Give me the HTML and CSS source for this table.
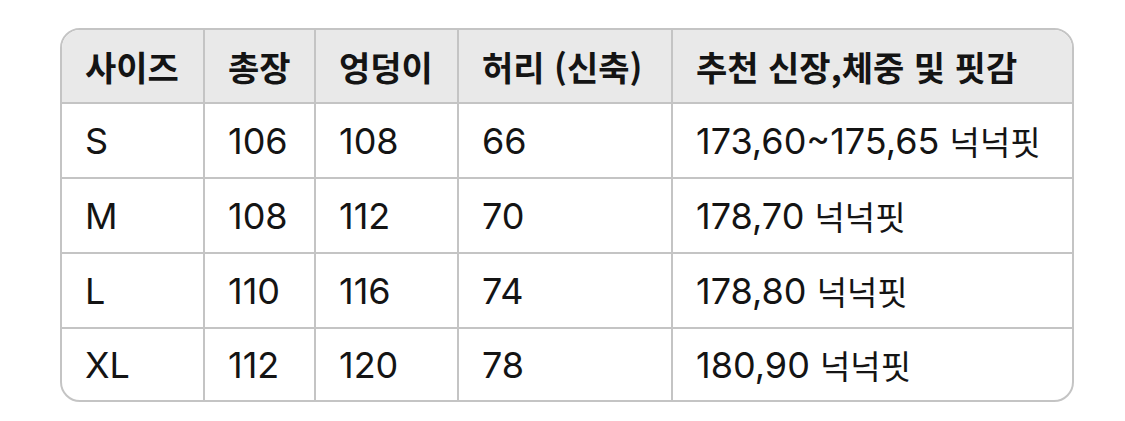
FILE: index.html
```html
<!DOCTYPE html>
<html lang="ko">
<head>
<meta charset="utf-8">
<link rel="stylesheet" href="styles.css">
</head>
<body>
<div class="table">
  <div class="cell head">사이즈</div>
  <div class="cell head">총장</div>
  <div class="cell head">엉덩이</div>
  <div class="cell head">허리 (신축)</div>
  <div class="cell head last-col">추천 신장,체중 및 핏감</div>

  <div class="cell">S</div>
  <div class="cell">106</div>
  <div class="cell">108</div>
  <div class="cell">66</div>
  <div class="cell last-col">173,60~175,65&nbsp;<span class="ko">넉넉핏</span></div>

  <div class="cell">M</div>
  <div class="cell">108</div>
  <div class="cell">112</div>
  <div class="cell">70</div>
  <div class="cell last-col">178,70&nbsp;<span class="ko">넉넉핏</span></div>

  <div class="cell">L</div>
  <div class="cell">110</div>
  <div class="cell">116</div>
  <div class="cell">74</div>
  <div class="cell last-col">178,80&nbsp;<span class="ko">넉넉핏</span></div>

  <div class="cell last-row">XL</div>
  <div class="cell last-row">112</div>
  <div class="cell last-row">120</div>
  <div class="cell last-row">78</div>
  <div class="cell last-row last-col">180,90&nbsp;<span class="ko">넉넉핏</span></div>
</div>
</body>
</html>
```
FILE: styles.css
```css
html, body {
  margin: 0;
  padding: 0;
  background: #ffffff;
}

body {
  padding: 28px 0 0 60px;
  font-family: Inter, "Noto Sans CJK KR", sans-serif;
  color: #141414;
}

.table {
  display: grid;
  grid-template-columns: 143px 111px 143px 214px 399px;
  grid-template-rows: 74px 75px 75px 75px 71px;
  width: 1010px;
  border: 2px solid #c4c4c4;
  border-radius: 20px;
  overflow: hidden;
}

.cell {
  display: flex;
  align-items: center;
  padding-left: 23px;
  font-size: 36px;
  font-weight: 400;
  white-space: nowrap;
  border-right: 2px solid #c4c4c4;
  border-bottom: 2px solid #c4c4c4;
}

.head {
  background: #e9e9e9;
  font-size: 34px;
  font-weight: 600;
  font-family: "Noto Sans CJK KR", Inter, sans-serif;
}

.ko {
  font-family: "Noto Sans CJK KR", sans-serif;
  font-size: 33px;
}

.last-col {
  border-right: none;
}

.last-row {
  border-bottom: none;
}
```
